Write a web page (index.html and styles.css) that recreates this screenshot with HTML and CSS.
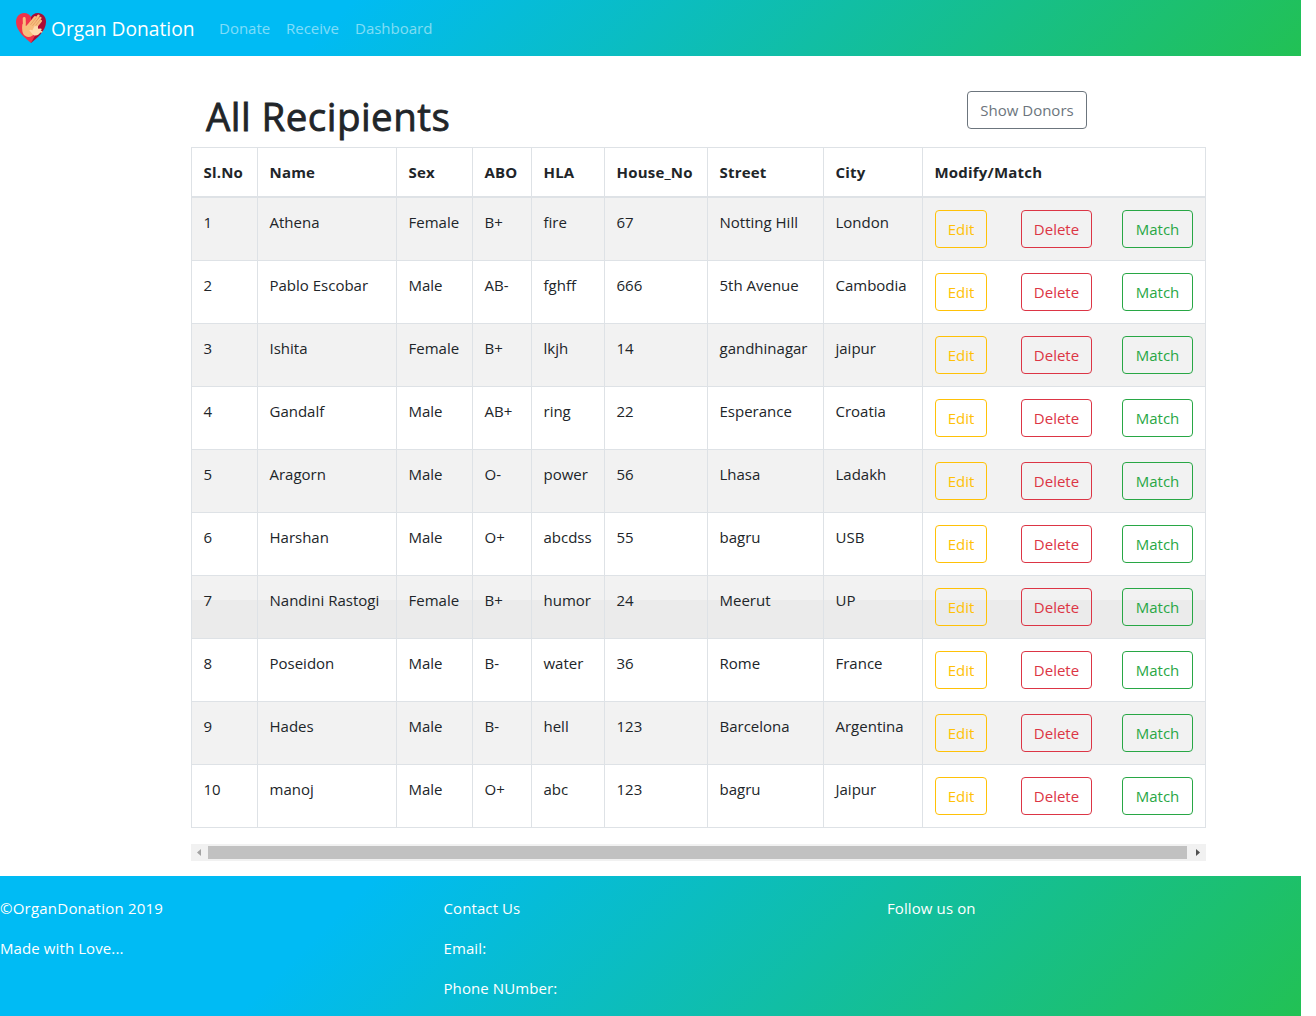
FILE: index.html
```html
<!DOCTYPE html>
<html lang="en">
<head>
<meta charset="utf-8">
<title>Organ Donation</title>
<link rel="stylesheet" href="styles.css">
</head>
<body>
<div class="page">
  <nav class="navbar">
    <a class="brand">
      <svg class="logo" viewBox="0 0 30 30" width="30" height="30">
        <path fill="#f0334b" d="M15 30C10 26 0 18 0 9C0 3.500 3.500 0 8 0C11.500 0 14 2 15 4Z"/>
        <path fill="#a80d35" d="M15 4C16 2 18.500 0 22 0C26.500 0 30 3.500 30 9C30 18 20 26 15 30Z"/>
        <path fill="#f0334b" d="M11 23L20 21L15 30Z"/>
        <path fill="#f8bd7d" d="M6.500 11L10 13L14 9.500L22 12L19 20C17 23.500 12.500 25 9.500 23C6.300 21 5.700 17.500 6.500 11Z"/>
        <g fill="none" stroke="#f8bd7d" stroke-linecap="round">
          <path stroke-width="3" d="M8.200 5.600C8.600 9 8.300 12 8 15"/>
          <path stroke-width="2.500" d="M12.500 12.500L19 4.200M15 13L22.500 2.800M17 14L24.300 5M19 15L24.800 8"/>
          <path stroke="#d98f55" stroke-width=".6" d="M14.800 11.500L20.200 4.800M16.800 12.500L23 4.700M18.800 13.500L24 7"/>
        </g>
        <path fill="#ffdbac" d="M13.200 17.300C14 16.300 15.500 16.700 16.300 17.600L18.500 12.900C19.300 12 20 12.700 19.800 13.700L21 12.800C22 12.500 22.200 13.500 21.900 14.500L22.200 15.800L25 15.500C26.200 16 25.700 17 24.700 17.500L26.500 18.500C26.500 19.700 25.400 19.800 24.500 19.500L22.500 21.500C20 23.500 17 22.500 15.500 20Z"/>
      </svg>
      <span class="brand-name">Organ Donation</span>
    </a>
    <a class="nav-link donate">Donate</a>
    <a class="nav-link receive">Receive</a>
    <a class="nav-link dashboard">Dashboard</a>
  </nav>

  <main class="content">
    <header class="title-row">
      <h1>All Recipients</h1>
      <button class="btn secondary">Show Donors</button>
    </header>
    <table class="recipients">
      <colgroup><col class="c-no"><col class="c-name"><col class="c-sex"><col class="c-abo"><col class="c-hla"><col class="c-house"><col class="c-street"><col class="c-city"><col class="c-actions"></colgroup>
      <thead>
        <tr><th>Sl.No</th><th>Name</th><th>Sex</th><th>ABO</th><th>HLA</th><th>House_No</th><th>Street</th><th>City</th><th>Modify/Match</th></tr>
      </thead>
      <tbody>
        <tr><td>1</td><td>Athena</td><td>Female</td><td>B+</td><td>fire</td><td>67</td><td>Notting Hill</td><td>London</td><td><div class="actions"><button class="btn warning">Edit</button><button class="btn danger">Delete</button><button class="btn success">Match</button></div></td></tr>
        <tr><td>2</td><td>Pablo Escobar</td><td>Male</td><td>AB-</td><td>fghff</td><td>666</td><td>5th Avenue</td><td>Cambodia</td><td><div class="actions"><button class="btn warning">Edit</button><button class="btn danger">Delete</button><button class="btn success">Match</button></div></td></tr>
        <tr><td>3</td><td>Ishita</td><td>Female</td><td>B+</td><td>lkjh</td><td>14</td><td>gandhinagar</td><td>jaipur</td><td><div class="actions"><button class="btn warning">Edit</button><button class="btn danger">Delete</button><button class="btn success">Match</button></div></td></tr>
        <tr><td>4</td><td>Gandalf</td><td>Male</td><td>AB+</td><td>ring</td><td>22</td><td>Esperance</td><td>Croatia</td><td><div class="actions"><button class="btn warning">Edit</button><button class="btn danger">Delete</button><button class="btn success">Match</button></div></td></tr>
        <tr><td>5</td><td>Aragorn</td><td>Male</td><td>O-</td><td>power</td><td>56</td><td>Lhasa</td><td>Ladakh</td><td><div class="actions"><button class="btn warning">Edit</button><button class="btn danger">Delete</button><button class="btn success">Match</button></div></td></tr>
        <tr><td>6</td><td>Harshan</td><td>Male</td><td>O+</td><td>abcdss</td><td>55</td><td>bagru</td><td>USB</td><td><div class="actions"><button class="btn warning">Edit</button><button class="btn danger">Delete</button><button class="btn success">Match</button></div></td></tr>
        <tr class="active"><td>7</td><td>Nandini Rastogi</td><td>Female</td><td>B+</td><td>humor</td><td>24</td><td>Meerut</td><td>UP</td><td><div class="actions"><button class="btn warning">Edit</button><button class="btn danger">Delete</button><button class="btn success">Match</button></div></td></tr>
        <tr><td>8</td><td>Poseidon</td><td>Male</td><td>B-</td><td>water</td><td>36</td><td>Rome</td><td>France</td><td><div class="actions"><button class="btn warning">Edit</button><button class="btn danger">Delete</button><button class="btn success">Match</button></div></td></tr>
        <tr><td>9</td><td>Hades</td><td>Male</td><td>B-</td><td>hell</td><td>123</td><td>Barcelona</td><td>Argentina</td><td><div class="actions"><button class="btn warning">Edit</button><button class="btn danger">Delete</button><button class="btn success">Match</button></div></td></tr>
        <tr><td>10</td><td>manoj</td><td>Male</td><td>O+</td><td>abc</td><td>123</td><td>bagru</td><td>Jaipur</td><td><div class="actions"><button class="btn warning">Edit</button><button class="btn danger">Delete</button><button class="btn success">Match</button></div></td></tr>
      </tbody>
    </table>
    <div class="scrollbar">
      <svg width="17" height="17" viewBox="0 0 17 17"><path fill="#a3a3a3" d="M6 8.500L10 5V12Z"/></svg>
      <div class="thumb"></div>
      <svg width="19" height="17" viewBox="0 0 19 17"><path fill="#505050" d="M13 8.500L9 5V12Z"/></svg>
    </div>
  </main>

  <footer class="footer">
    <div><p class="copyright">©OrganDonation 2019</p><p>Made with Love...</p></div>
    <div><p>Contact Us</p><p>Email:</p><p>Phone NUmber:</p></div>
    <div><p>Follow us on</p></div>
  </footer>
</div>
</body>
</html>
```
FILE: styles.css
```css
* { box-sizing: border-box; }

body {
  margin: 0;
  background: #fff;
  color: #212529;
  font: 400 15px/24px "Open Sans", "Noto Sans", sans-serif;
}

.page {
  width: 1301px;
  height: 1016px;
  display: flex;
  flex-direction: column;
}

.navbar,
.footer {
  background: linear-gradient(135deg, #00bbf4 26%, #22c154 100%);
  color: #fff;
}

.navbar {
  height: 56px;
  padding: 0 16px;
  display: flex;
  align-items: center;
}

.brand {
  display: flex;
  align-items: center;
  gap: 5px;
  width: 203px;
  font-size: 19.2px;
  white-space: nowrap;
}

.logo { flex: none; }
.brand-name { padding-top: 2px; }
.nav-link { color: rgba(255, 255, 255, .5); white-space: nowrap; }
.donate { width: 67px; }
.receive { width: 69px; }

.content {
  width: 1015px;
  margin-left: 191px;
  height: 820px;
}

.title-row {
  height: 91px;
  padding: 35px 119px 0 15px;
  display: flex;
  align-items: flex-start;
  justify-content: space-between;
}

h1 {
  margin: 1px 0 0;
  font-size: 38.5px;
  font-weight: 400;
  letter-spacing: .45px;
  line-height: 48px;
  -webkit-text-stroke: .8px currentColor;
}

.btn {
  height: 38px;
  padding: 0;
  border: 1px solid;
  border-radius: 4px;
  background: transparent;
  font: inherit;
  white-space: nowrap;
}

.secondary { width: 120px; color: #6c757d; }
.warning { width: 52px; color: #ffc107; margin-right: 34px; }
.danger { width: 71px; color: #dc3545; margin-right: 30px; }
.success { width: 71px; color: #28a745; }

.recipients {
  width: 1015px;
  table-layout: fixed;
  border-collapse: collapse;
  border: 1px solid #dee2e6;
}

.c-no { width: 66px; }
.c-name { width: 139px; }
.c-sex { width: 76px; }
.c-abo { width: 59px; }
.c-hla { width: 73px; }
.c-house { width: 103px; }
.c-street { width: 116px; }
.c-city { width: 99px; }
.c-actions { width: 283px; }

th,
td {
  padding: 12px 0 12px 11.5px;
  border: 1px solid #dee2e6;
  text-align: left;
  vertical-align: top;
  white-space: nowrap;
}

td:last-child { padding-left: 12px; }
th { border-bottom-width: 2px; font-weight: 700; letter-spacing: .2px; }
tbody tr:nth-child(odd) { background: #f2f2f2; }
tbody tr.active { background: linear-gradient(#f2f2f2 24px, #ebebeb 24px); }
.actions { display: flex; }

.scrollbar {
  height: 17px;
  margin-top: 16px;
  display: flex;
  align-items: center;
  background: #f1f1f1;
}

.thumb { flex: 1; height: 13px; background: #c1c1c1; }

.footer {
  height: 140px;
  padding-top: 20px;
  display: grid;
  grid-template-columns: 443.500px 443.500px 1fr;
}

.footer p { margin: 0 0 16px; letter-spacing: .1px; }
.footer .copyright { letter-spacing: .22px; }
```
